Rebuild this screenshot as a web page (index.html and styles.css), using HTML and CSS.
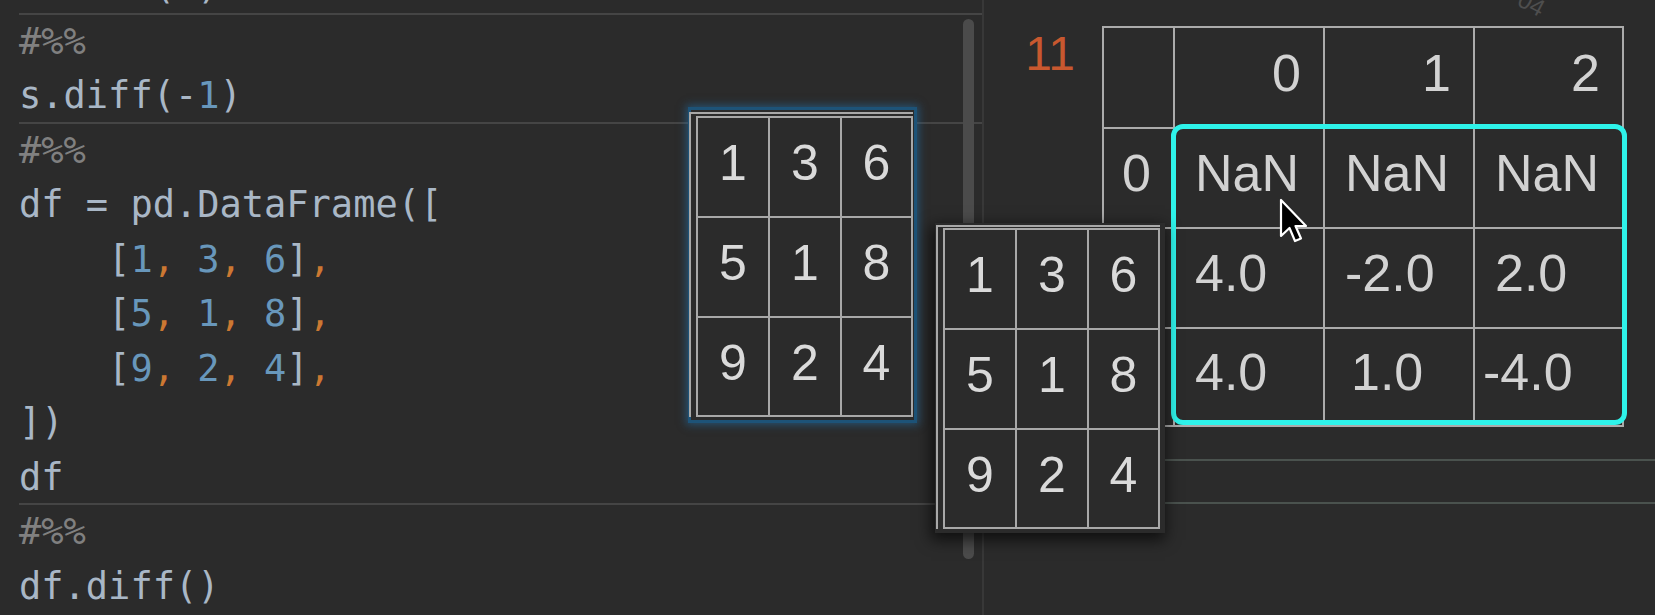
FILE: index.html
```html
<!DOCTYPE html>
<html lang="en">
<head>
<meta charset="utf-8">
<title>diff</title>
<link rel="stylesheet" href="styles.css">
</head>
<body>
<div class="app">
  <section class="editor">
    <div class="code">
      <div class="cell">
        <div class="ln">s.diff(<span class="num">1</span>)</div>
      </div>
      <div class="cell">
        <div class="ln cm">#%%</div>
        <div class="ln">s.diff(-<span class="num">1</span>)</div>
      </div>
      <div class="cell">
        <div class="ln cm">#%%</div>
        <div class="ln">df = pd.DataFrame([</div>
        <div class="ln">    [<span class="num">1</span><span class="op">,</span> <span class="num">3</span><span class="op">,</span> <span class="num">6</span>]<span class="op">,</span></div>
        <div class="ln">    [<span class="num">5</span><span class="op">,</span> <span class="num">1</span><span class="op">,</span> <span class="num">8</span>]<span class="op">,</span></div>
        <div class="ln">    [<span class="num">9</span><span class="op">,</span> <span class="num">2</span><span class="op">,</span> <span class="num">4</span>]<span class="op">,</span></div>
        <div class="ln">])</div>
        <div class="ln">df</div>
      </div>
      <div class="cell">
        <div class="ln cm">#%%</div>
        <div class="ln">df.diff()</div>
      </div>
    </div>
  </section>
  <div class="divider"></div>
  <section class="output">
    <div class="out-row">
      <div class="prompt">11</div>
      <div class="df-wrap">
        <div class="df">
          <div class="th"></div>
          <div class="th">0</div>
          <div class="th">1</div>
          <div class="th">2</div>
          <div class="idx">0</div>
          <div class="td">NaN</div>
          <div class="td">NaN</div>
          <div class="td">NaN</div>
          <div class="idx"></div>
          <div class="td">4.0</div>
          <div class="td">-2.0</div>
          <div class="td">2.0</div>
          <div class="idx"></div>
          <div class="td">4.0</div>
          <div class="td td-one">1.0</div>
          <div class="td td-shift">-4.0</div>
        </div>
        <div class="highlight"></div>
      </div>
    </div>
    <div class="rule rule-a"></div>
    <div class="rule rule-b"></div>
  </section>

  <div class="scrollbar"></div>
  <span class="ghost">04</span>

  <div class="float float-blue">
    <div class="frag">
      <div class="mini">
        <div>1</div><div>3</div><div>6</div>
        <div>5</div><div>1</div><div>8</div>
        <div>9</div><div>2</div><div>4</div>
      </div>
    </div>
  </div>

  <div class="float float-dark">
    <div class="frag">
      <div class="mini">
        <div>1</div><div>3</div><div>6</div>
        <div>5</div><div>1</div><div>8</div>
        <div>9</div><div>2</div><div>4</div>
      </div>
    </div>
  </div>

  <svg class="cursor" width="30" height="48" viewBox="0 0 30 48" aria-hidden="true">
    <path d="M2 2 L2 38 L10.5 30 L16 43 L22 40.5 L16.5 28 L27 28 Z" fill="#000" stroke="#fff" stroke-width="2.2" stroke-linejoin="round"/>
  </svg>
</div>
</body>
</html>
```
FILE: styles.css
```css
* { box-sizing: border-box; margin: 0; padding: 0; }
html, body {
  width: 1655px;
  height: 615px;
  overflow: hidden;
  background: #2b2b2b;
}
.app {
  position: relative;
  display: flex;
  width: 1655px;
  height: 615px;
  background: #2b2b2b;
}

/* ---------- editor ---------- */
.editor {
  width: 982px;
  flex: none;
}
.code {
  margin-top: -40px;
  padding-left: 19px;
  font-family: "DejaVu Sans Mono", monospace;
  font-size: 37px;
  color: #a9b7c6;
}
.cell {
  border-top: 2px solid #454545;
  margin-top: -2px;
}
.cell:first-child {
  border-top: none;
  margin-top: 0;
}
.ln {
  height: 54.5px;
  line-height: 54.5px;
  white-space: pre;
}
.cm { color: #808080; }
.num { color: #6897bb; }
.op { color: #cc7832; }

.divider {
  width: 2px;
  flex: none;
  background: #383838;
}

.scrollbar {
  position: absolute;
  left: 963px;
  top: 19px;
  width: 11px;
  height: 540px;
  border-radius: 6px;
  background: #4b4b4b;
}

/* ---------- output ---------- */
.output {
  flex: 1;
  display: flex;
  flex-direction: column;
}
.out-row {
  display: flex;
}
.prompt {
  width: 118px;
  flex: none;
  padding-top: 30px;
  padding-right: 27px;
  text-align: right;
  font-family: "Liberation Sans", Arial, sans-serif;
  font-size: 48px;
  line-height: 48px;
  color: #c8582f;
}
.df-wrap {
  position: relative;
  margin-top: 26px;
}
.df {
  display: grid;
  grid-template-columns: 69px 148px 148px 147px;
  grid-template-rows: 99px 98px 98px 96px;
  gap: 2px;
  padding: 2px;
  background: #ababab;
}
.df > div {
  background: #2b2b2b;
  display: flex;
  align-items: center;
  padding-bottom: 10px;
  font-family: "Liberation Sans", Arial, sans-serif;
  font-size: 52px;
  color: #d2d2d2;
}
.df > .th,
.df > .idx {
  justify-content: flex-end;
  padding-right: 22px;
}
.df > .td { padding-left: 20px; }
.df > .td-one { padding-left: 26px; }
.df > .td-shift { padding-left: 8px; }

.highlight {
  position: absolute;
  left: 69px;
  top: 98px;
  width: 456px;
  height: 301px;
  border: 5px solid #2ef3ea;
  border-radius: 12px;
}

.rule {
  height: 2px;
  background: #4a524e;
}
.rule-a { margin-top: 32px; }
.rule-b { margin-top: 41px; }

.ghost {
  position: absolute;
  left: 1518px;
  top: -10px;
  font-family: "Liberation Sans", Arial, sans-serif;
  font-size: 24px;
  color: #4e4e4e;
  transform: rotate(28deg);
}

/* ---------- floating snippets ---------- */
.float {
  position: absolute;
  background: #2b2b2b;
}
.frag {
  width: max-content;
  border-top: 2px solid #a8a8a8;
  border-left: 2px solid #a8a8a8;
}
.mini {
  width: max-content;
  display: grid;
  grid-template-columns: 70px 70px 69px;
  grid-template-rows: 98px 98px 97px;
  gap: 2px;
  padding: 2px;
  background: #a8a8a8;
}
.mini > div {
  background: #2b2b2b;
  display: flex;
  align-items: center;
  justify-content: center;
  padding-bottom: 8px;
  font-family: "Liberation Sans", Arial, sans-serif;
  font-size: 50px;
  color: #dadada;
}
.float-blue {
  left: 688px;
  top: 107px;
  width: 229px;
  height: 316px;
  padding: 2px 0 0 0;
  border: 3px solid #1d5378;
  box-shadow: 0 0 8px 2px rgba(35, 110, 165, 0.55);
}
.float-blue .frag {
  margin-left: -2px;
  padding: 2px 0 0 5px;
}
.float-dark {
  left: 935px;
  top: 223px;
  width: 230px;
  height: 310px;
  padding: 2px 0 0 1px;
  box-shadow: -2px 5px 14px 2px rgba(0, 0, 0, 0.65);
}
.float-dark .frag {
  padding: 1px 0 0 5px;
}

.cursor {
  position: absolute;
  left: 1279px;
  top: 198px;
}
```
